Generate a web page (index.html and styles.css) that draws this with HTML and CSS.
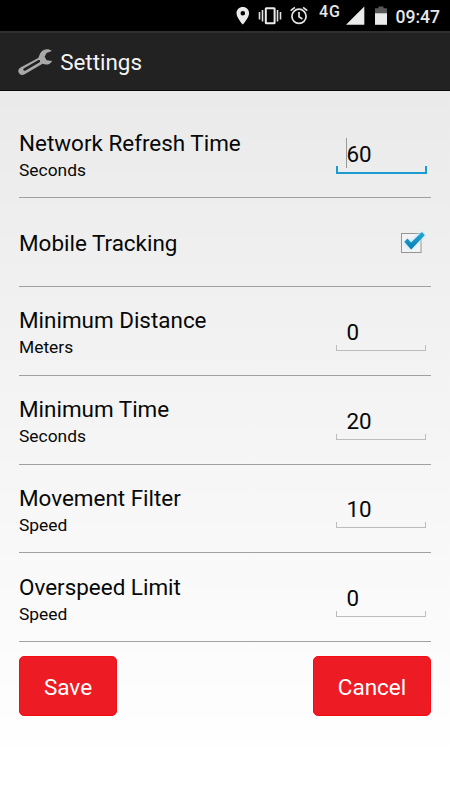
FILE: index.html
```html
<!DOCTYPE html>
<html lang="en">
<head>
<meta charset="utf-8">
<title>Settings</title>
<link rel="stylesheet" href="styles.css">
</head>
<body>
<div class="status">
  <svg class="status-icons" width="75" height="31" viewBox="0 0 75 31">
    <path fill="#ebebeb" fill-rule="evenodd" d="M7.8 7C4.200 7 1.500 9.700 1.500 13.200C1.500 17.800 7.800 24.500 7.800 24.500S14.100 17.800 14.100 13.200C14.100 9.700 11.400 7 7.800 7ZM7.800 10.900a2.300 2.300 0 1 1 0 4.600a2.300 2.300 0 0 1 0-4.600Z"/>
    <path fill="none" stroke="#e0e0e0" stroke-width="1.6" d="M24.500 12v7.500M27.500 10v11.500M42.500 10v11.500M45.500 12v7.500"/>
    <rect x="30.800" y="8.300" width="8.800" height="14.900" rx=".5" fill="none" stroke="#ebebeb" stroke-width="2"/>
    <g fill="none" stroke="#e4e4e4" stroke-width="1.700"><circle cx="64" cy="16.300" r="7.100"/><path d="M64 12v4.800l3.400 2.200M55.700 10.700l4.200-3.400M72.300 10.700l-4.200-3.400"/></g>
  </svg>
  <span class="network">4G</span>
  <svg class="status-icons" width="42" height="31" viewBox="0 0 42 31">
    <path fill="#ebebeb" d="M0 24.800L18.300 6.500V24.800Z"/>
    <path fill="#585858" d="M29 8.300h3.500V6.500h5v1.800H41v5H29Z"/>
    <path fill="#ebebeb" d="M29 13.200h12v11.600H29Z"/>
  </svg>
  <span class="clock">09:47</span>
</div>
<header class="bar">
  <svg class="wrench" width="36" height="28" viewBox="0 0 36 28">
    <path fill="#a9a9a9" fill-rule="evenodd" d="M33.800 3C31 .6 26.500 .8 23.600 3.400C21.600 5.300 21.400 7.800 20.200 10L2.500 19.400C.1 20.800-.2 23.400.9 25C2.100 27.200 4.600 27.300 6.600 26.200L24.600 15.800C28 17.300 32.300 16.800 34.200 13L28.700 12.300L26.600 8.800L28.600 5ZM20 12.300C21.900 11.400 22.900 13.400 21.300 14.400L7.600 22.600C5.600 23.600 4.300 21.400 6.100 20.300Z"/>
  </svg>
  <h1>Settings</h1>
</header>
<main>
  <section class="row">
    <div class="label"><h2>Network Refresh Time</h2><p>Seconds</p></div>
    <div class="field focused">60</div>
  </section>
  <section class="row">
    <div class="label"><h2>Mobile Tracking</h2></div>
    <svg class="check" width="34" height="34" viewBox="0 0 34 34">
      <defs>
        <linearGradient id="tick" x1="0" y1="0" x2="0" y2="1"><stop offset="0" stop-color="#24a9d9"/><stop offset="1" stop-color="#087daf"/></linearGradient>
        <filter id="glow" x="-40%" y="-40%" width="180%" height="180%"><feGaussianBlur stdDeviation="1.700"/></filter>
      </defs>
      <rect x="4.500" y="8.500" width="19.500" height="19" fill="#f3f3f3" stroke="#949494"/>
      <path d="M9 16l4.500 5L26 8.500" fill="none" stroke="#b9e9fb" stroke-width="6" filter="url(#glow)"/>
      <path d="M7.300 16.700l3.200-3.200 3.600 3.900L24.900 7l3 3L14.200 24.600Z" fill="url(#tick)"/>
    </svg>
  </section>
  <section class="row">
    <div class="label"><h2>Minimum Distance</h2><p>Meters</p></div>
    <div class="field">0</div>
  </section>
  <section class="row">
    <div class="label"><h2>Minimum Time</h2><p>Seconds</p></div>
    <div class="field">20</div>
  </section>
  <section class="row">
    <div class="label"><h2>Movement Filter</h2><p>Speed</p></div>
    <div class="field">10</div>
  </section>
  <section class="row">
    <div class="label"><h2>Overspeed Limit</h2><p>Speed</p></div>
    <div class="field">0</div>
  </section>
  <div class="actions">
    <button class="save">Save</button>
    <button class="cancel">Cancel</button>
  </div>
</main>
</body>
</html>
```

FILE: styles.css
```css
* { box-sizing: border-box; }
body {
  margin: 0;
  height: 800px;
  overflow: hidden;
  font-family: Roboto, sans-serif;
  color: #080808;
  display: flex;
  flex-direction: column;
}
h1, h2, p { margin: 0; font-weight: 400; }
.status {
  height: 31px;
  flex: none;
  background: #000;
  color: #e8e8e8;
  display: flex;
  padding-left: 235px;
}
.status-icons { flex: none; display: block; }
.network {
  width: 36px;
  padding-left: 9px;
  font-size: 16px;
  font-weight: 500;
  letter-spacing: .8px;
  line-height: 24px;
}
.clock {
  padding-left: 7.4px;
  font-size: 17.6px;
  font-weight: 500;
  line-height: 34px;
}
.bar {
  height: 60px;
  flex: none;
  background: #222;
  border-top: 2px solid #303030;
  border-bottom: 1px solid #080808;
  display: flex;
  align-items: center;
  padding-left: 18px;
}
.wrench { flex: none; }
.bar h1 {
  margin-left: 6.2px;
  font-size: 22.4px;
  line-height: 28px;
  color: #f5f5f5;
}
main {
  flex: 1;
  padding: 18.4px 19px 0;
  background: linear-gradient(#eaeaea, #fff 95%);
}
.row {
  height: 88.8px;
  border-bottom: 1px solid #a0a0a0;
  display: flex;
  justify-content: space-between;
  align-items: center;
}
.label { padding-top: 2px; }
.row h2 { font-size: 22.45px; line-height: 28px; }
.row p { font-size: 17.4px; line-height: 22px; margin-top: 2px; }
.label:has(p) { padding-top: 3px; }
.field {
  position: relative;
  width: 90px;
  height: 31px;
  margin: 9px 5px 0 0;
  padding-left: 10.5px;
  font-size: 22.4px;
  line-height: 24px;
}
.field.focused {
  width: 91px;
  height: 32px;
  margin: 10px 4px 0 0;
  line-height: 25px;
}
.field::after {
  content: "";
  position: absolute;
  inset: auto 0 0;
  height: 5px;
  border: 1px solid #bcbcbc;
  border-top: 0;
}
.field.focused::after {
  height: 6px;
  border: 2px solid #1b9bd0;
  border-top: 0;
}
.field.focused::before {
  content: "";
  position: absolute;
  left: 10px;
  top: -4px;
  width: 1px;
  height: 30px;
  background: #999;
}
.check { margin: -1px 0 0; }
.actions {
  display: flex;
  justify-content: space-between;
  padding-top: 14px;
}
button {
  height: 60px;
  border: 1px solid #f50c13;
  border-radius: 5px;
  background: #ed1c24;
  color: #fff;
  font: 400 22.5px/28px Roboto, sans-serif;
  padding: 2px 0 0;
}
.save { width: 98px; }
.cancel { width: 118px; }
```
